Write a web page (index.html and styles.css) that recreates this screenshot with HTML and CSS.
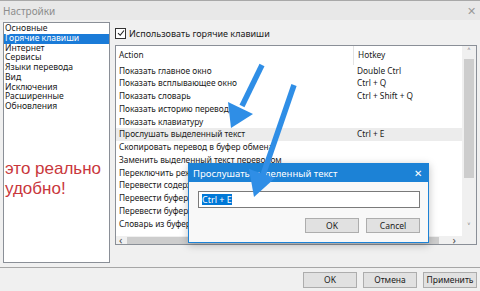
FILE: index.html
```html
<!DOCTYPE html>
<html lang="ru">

<head>
    <meta charset="UTF-8">
    <title>Настройки</title>
    <link rel="stylesheet" href="styles.css">
</head>

<body>
    <div class="titlebar">
        <span class="title">Настройки</span>
        <span class="close">&#x2715;</span>
    </div>

    <div class="main">
        <div class="nav">
            <div class="nav-item">Основные</div>
            <div class="nav-item selected">Горячие клавиши</div>
            <div class="nav-item">Интернет</div>
            <div class="nav-item">Сервисы</div>
            <div class="nav-item">Языки перевода</div>
            <div class="nav-item">Вид</div>
            <div class="nav-item">Исключения</div>
            <div class="nav-item">Расширенные</div>
            <div class="nav-item">Обновления</div>
            <p class="note">это реально<br>удобно!</p>
        </div>

        <div class="panel">
            <label class="check-row">
                <span class="checkbox">
                    <svg width="8" height="8" viewBox="0 0 8 8"><path d="M1 4.2 L3.2 6.3 L7 1.5" fill="none" stroke="#222" stroke-width="1.1"/></svg>
                </span>
                Использовать горячие клавиши
            </label>

            <div class="table">
                <div class="table-body">
                    <div class="row head">
                        <span class="cell action">Action</span>
                        <span class="cell hotkey">Hotkey</span>
                    </div>
                    <div class="row"><span class="cell action">Показать главное окно</span><span class="cell hotkey">Double Ctrl</span></div>
                    <div class="row"><span class="cell action">Показать всплывающее окно</span><span class="cell hotkey">Ctrl + Q</span></div>
                    <div class="row"><span class="cell action">Показать словарь</span><span class="cell hotkey">Ctrl + Shift + Q</span></div>
                    <div class="row"><span class="cell action">Показать историю переводов</span><span class="cell hotkey"></span></div>
                    <div class="row"><span class="cell action">Показать клавиатуру</span><span class="cell hotkey"></span></div>
                    <div class="row current"><span class="cell action">Прослушать выделенный текст</span><span class="cell hotkey">Ctrl + E</span></div>
                    <div class="row"><span class="cell action">Скопировать перевод в буфер обмена</span><span class="cell hotkey"></span></div>
                    <div class="row"><span class="cell action">Заменить выделенный текст переводом</span><span class="cell hotkey"></span></div>
                    <div class="row"><span class="cell action">Переключить режим перевода</span><span class="cell hotkey"></span></div>
                    <div class="row"><span class="cell action">Перевести содержимое буфера</span><span class="cell hotkey"></span></div>
                    <div class="row"><span class="cell action">Перевести буфер обмена</span><span class="cell hotkey"></span></div>
                    <div class="row"><span class="cell action">Перевести буфер в окне</span><span class="cell hotkey"></span></div>
                    <div class="row"><span class="cell action">Словарь из буфера обмена</span><span class="cell hotkey"></span></div>
                </div>
                <div class="vscroll">
                    <span class="arrow">&#x2C4;</span>
                    <span class="thumb"></span>
                    <span class="arrow down">&#x2C5;</span>
                </div>
                <div class="hscroll">
                    <span class="arrow">&lsaquo;</span>
                    <span class="thumb"></span>
                    <span class="arrow">&rsaquo;</span>
                </div>
                <div class="corner"></div>
            </div>
        </div>
    </div>

    <div class="footer">
        <button>OK</button>
        <button>Отмена</button>
        <button>Применить</button>
    </div>

    <!-- hotkey capture dialog, floating over the table -->
    <div class="dialog">
        <div class="dialog-title">
            <span>Прослушать выделенный текст</span>
            <span class="dialog-close">&#x2715;</span>
        </div>
        <div class="dialog-body">
            <div class="input"><span class="sel">Ctrl + E</span></div>
            <div class="dialog-buttons">
                <button>OK</button>
                <button>Cancel</button>
            </div>
        </div>
    </div>

    <svg class="arrows" width="480" height="291" viewBox="0 0 480 291">
        <line x1="262" y1="65" x2="242" y2="106" stroke="#2f8ee6" stroke-width="5.5"/>
        <polygon points="228,102 253,114 231,128" fill="#2f8ee6"/>
        <line x1="294" y1="85" x2="263" y2="175" stroke="#2f8ee6" stroke-width="5.5"/>
        <polygon points="249,169 275,178 254,197" fill="#2f8ee6"/>
    </svg>
</body>

</html>
```

FILE: styles.css
```css
* {
    box-sizing: border-box;
}

body {
    margin: 0;
    width: 480px;
    height: 291px;
    overflow: hidden;
    position: relative;
    background: #f0f0f0;
    font-family: "Noto Sans", "Open Sans", sans-serif;
    font-size: 8.3px;
    color: #1a1a1a;
}

.titlebar {
    height: 20px;
    display: flex;
    align-items: center;
    justify-content: space-between;
    padding: 0 4px 0 3px;
    background: #e8e8e8;
    border-top: 1px solid #a8a8a8;
}

.title {
    font-size: 10px;
    color: #8c8c8c;
}

.close {
    font-size: 11px;
    color: #9a9a9a;
}

.main {
    display: flex;
    height: 247px;
    padding: 2px 3px 0 3px;
}

.nav {
    width: 107px;
    height: 241px;
    background: #fff;
    border: 1px solid #8a8f97;
    padding: 1px 0 0 0;
}

.nav-item {
    height: 9.75px;
    line-height: 9.75px;
    padding-left: 1px;
    font-size: 8.6px;
    white-space: nowrap;
}

.nav-item.selected {
    background: #1a7bd8;
    color: #fff;
}

.note {
    margin: 47px 0 0 1px;
    font-family: "Liberation Sans", Arial, sans-serif;
    font-size: 17px;
    line-height: 20px;
    color: #c9373c;
}

.panel {
    flex: 1;
    margin-left: 5px;
    display: flex;
    flex-direction: column;
}

.check-row {
    height: 23px;
    display: flex;
    align-items: center;
    gap: 3px;
    font-size: 9px;
    padding-bottom: 1px;
}

.checkbox {
    width: 11px;
    height: 11px;
    border: 1px solid #333;
    background: #fff;
    display: flex;
    align-items: center;
    justify-content: center;
}

.table {
    height: 200px;
    background: #fff;
    border: 1px solid #8a8f97;
    display: grid;
    grid-template-columns: 1fr 14px;
    grid-template-rows: 1fr 8px;
}

.table-body {
    overflow: hidden;
}

.row {
    display: flex;
    height: 12.75px;
    line-height: 12.75px;
    white-space: nowrap;
}

.row.head {
    height: 18.5px;
    line-height: 18.5px;
}

.row.current {
    background: #ececec;
}

.cell.action {
    width: 237px;
    padding-left: 3px;
    overflow: hidden;
}

.cell.hotkey {
    flex: 1;
    padding-left: 4px;
}

.row.head .cell.hotkey {
    border-left: 1px solid #e3e3e3;
}

.vscroll {
    background: #f0f0f0;
    display: flex;
    flex-direction: column;
    align-items: center;
}

.vscroll .arrow {
    height: 13px;
    line-height: 13px;
    font-size: 10px;
    color: #606060;
}

.vscroll .thumb {
    width: 10px;
    height: 119px;
    background: #cdcdcd;
}

.vscroll .down {
    margin-top: auto;
    margin-bottom: 2px;
}

.hscroll {
    background: #f0f0f0;
    display: flex;
    align-items: center;
    padding: 0 3px;
}

.hscroll .arrow {
    font-size: 11px;
    line-height: 8px;
    color: #505050;
}

.hscroll .thumb {
    width: 312px;
    height: 7px;
    margin: 0 4px 0 5px;
    background: #cdcdcd;
}

.hscroll .arrow:last-child {
    margin-left: auto;
    margin-right: 3px;
}

.corner {
    background: #f0f0f0;
}

.footer {
    height: 24px;
    border-top: 1px solid #a6a6a6;
    display: flex;
    justify-content: flex-end;
    align-items: center;
    gap: 6px;
    padding: 0 3px 0 0;
}

button {
    width: 54px;
    height: 16px;
    padding: 0;
    font-family: inherit;
    font-size: 8.5px;
    color: #1a1a1a;
    background: #e1e1e1;
    border: 1px solid #adadad;
}

.dialog {
    position: absolute;
    left: 188px;
    top: 163px;
    width: 241px;
    height: 80px;
    background: #f8f8f8;
    border: 1px solid #1c82d6;
    box-shadow: 0 2px 8px rgba(0, 0, 0, 0.25);
}

.dialog-title {
    height: 18px;
    display: flex;
    align-items: center;
    justify-content: space-between;
    padding: 0 6px 0 4px;
    background: #1c82d6;
    color: #fff;
    font-size: 9.5px;
}

.dialog-close {
    font-size: 10px;
}

.dialog-body {
    padding: 9px 8px 0 9px;
}

.input {
    height: 17px;
    background: #fff;
    border: 1px solid #7a7a7a;
    padding: 2px 3px;
    display: flex;
    align-items: center;
}

.input .sel {
    background: #0078d7;
    color: #fff;
    font-size: 9px;
    line-height: 11px;
}

.dialog-buttons {
    display: flex;
    justify-content: flex-end;
    gap: 7px;
    margin-top: 10px;
}

.dialog-buttons button {
    height: 15px;
}

.arrows {
    position: absolute;
    left: 0;
    top: 0;
    pointer-events: none;
}
```
